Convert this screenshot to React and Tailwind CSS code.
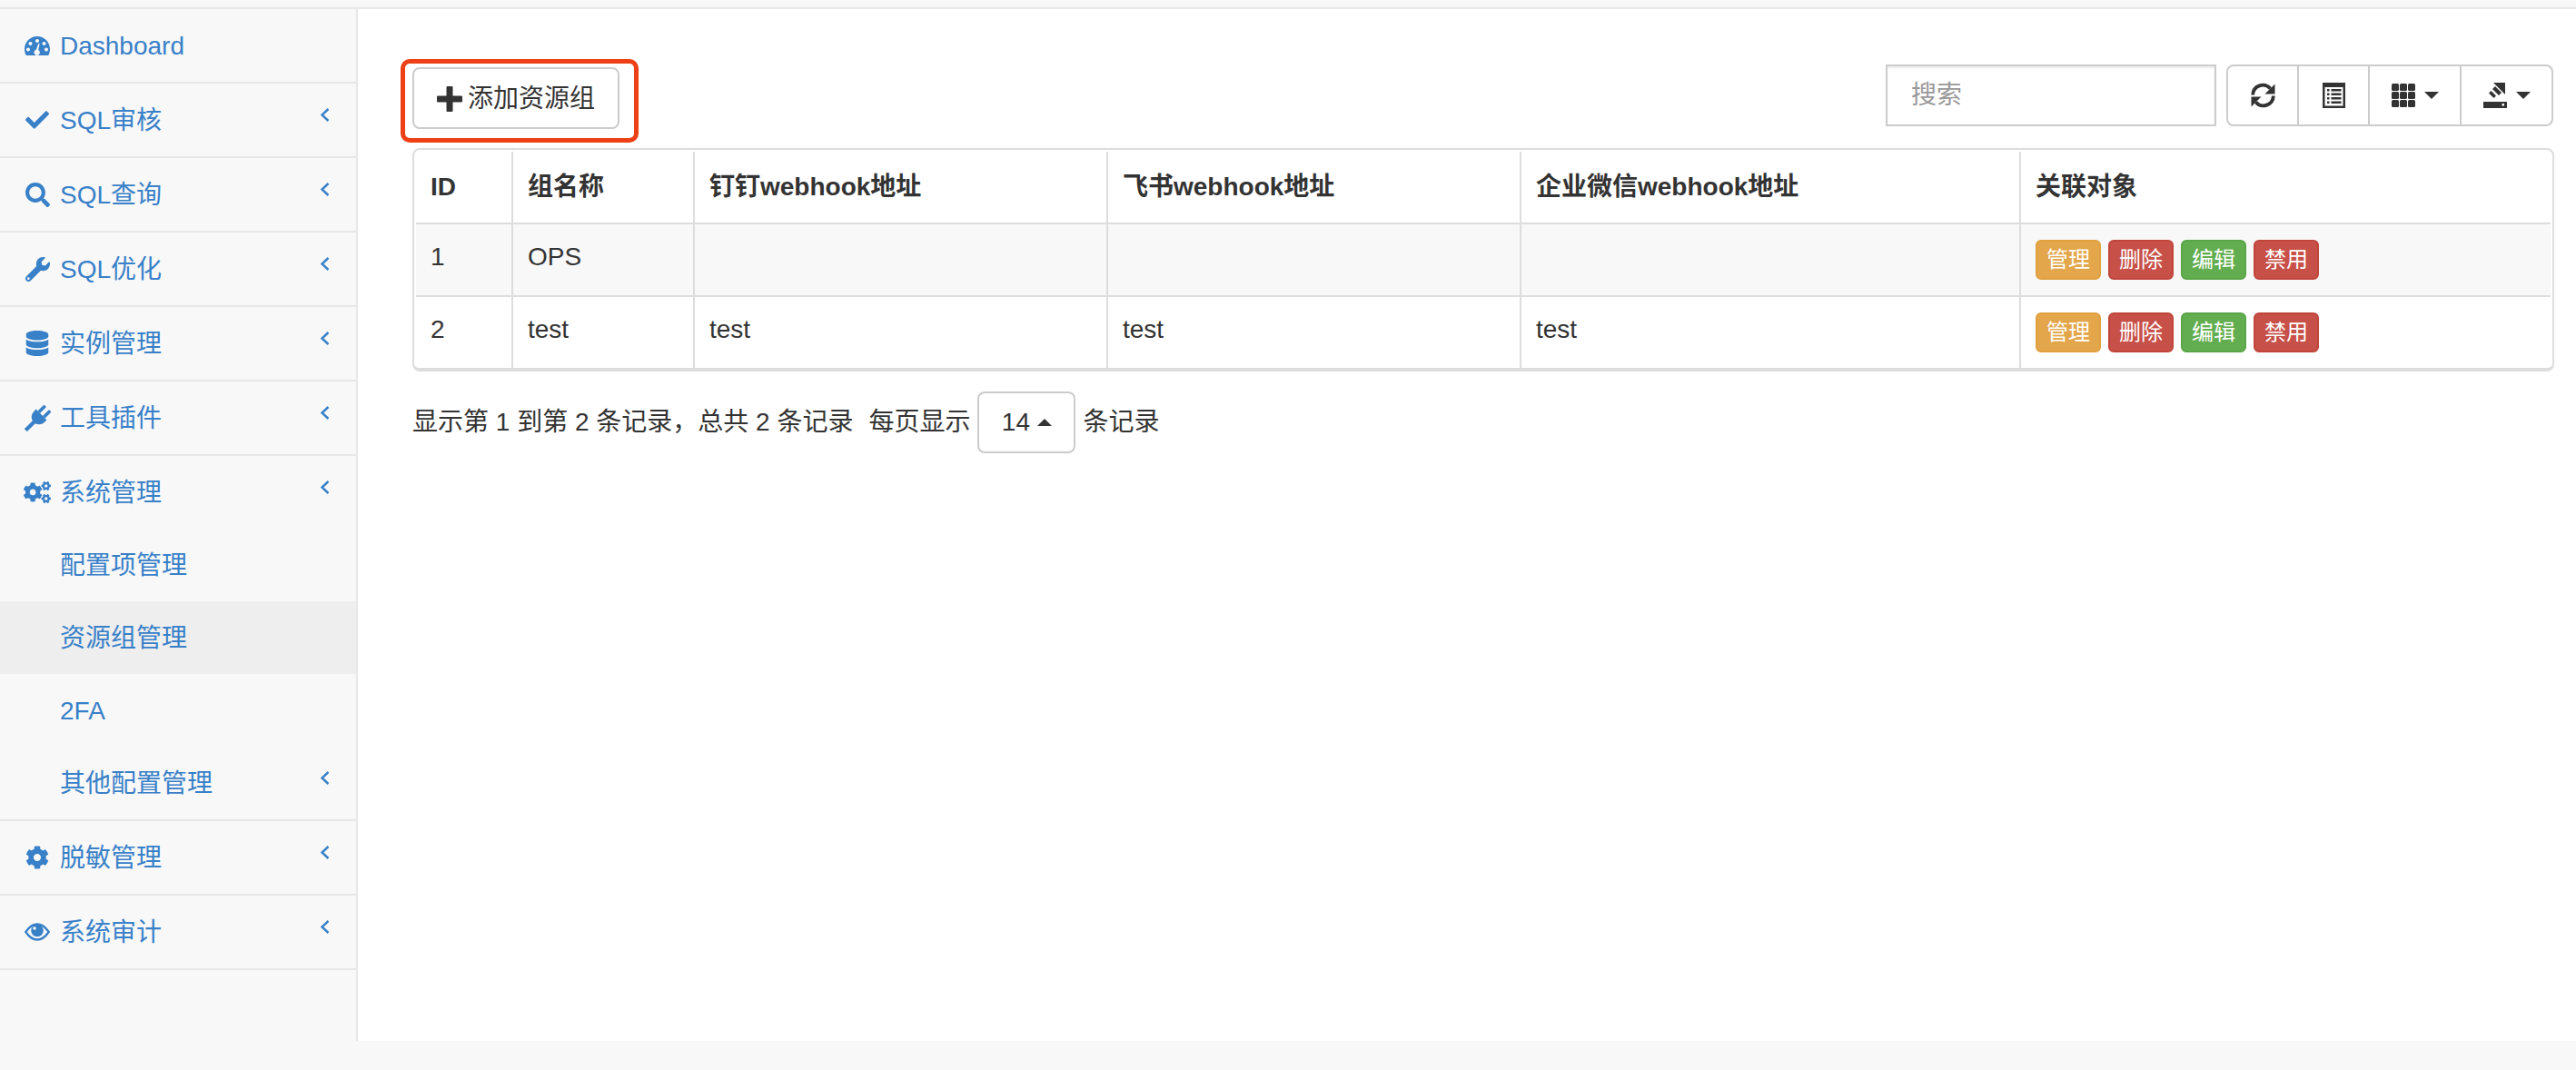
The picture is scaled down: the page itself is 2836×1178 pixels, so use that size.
import React from "react";
import { FaCheck, FaSearch, FaWrench, FaDatabase, FaCogs, FaCog } from "react-icons/fa";

function Chevron() {
  return (
    <svg width="12" height="20" viewBox="0 0 12 20" className="absolute right-[28px] top-[25px]" fill="none" stroke="#3880c8" strokeWidth="2.4">
      <path d="M9.5 3 L2.5 9.5 L9.5 16" />
    </svg>
  );
}

function Gauge() {
  return (
    <svg width="28" height="21" viewBox="0 0 28 21">
      <path
        fill="#3880c8"
        fillRule="evenodd"
        d="M14 0 C21.700 0 28 6.300 28 14 C28 16.500 27.400 19 26.200 21 H1.800 C.6 19 0 16.500 0 14 C0 6.300 6.300 0 14 0 Z M14 3 a2 2 0 1 0 .01 0 Z M6.500 6 a2 2 0 1 0 .01 0 Z M21.500 6 a2 2 0 1 0 .01 0 Z M4 12.500 a2 2 0 1 0 .01 0 Z M24 12.500 a2 2 0 1 0 .01 0 Z M15.200 8 L13 14.600 a3.200 3.200 0 1 0 2.200 .3 L16.600 8.500 Z"
      />
    </svg>
  );
}
function Plug() {
  return (
    <svg width="29" height="29" viewBox="0 0 28 28" fill="#3880c8">
      <g transform="rotate(45 14 14)">
        <path d="M6 8.500 H22 V12 a8 8 0 0 1 -16 0 Z" />
        <rect x="8.500" y="-1" width="3.500" height="9.500" rx="1" />
        <rect x="16" y="-1" width="3.500" height="9.500" rx="1" />
        <rect x="12" y="19" width="4" height="13" />
      </g>
    </svg>
  );
}
function Eye() {
  return (
    <svg width="28" height="20" viewBox="0 0 28 20">
      <path fill="none" stroke="#3880c8" strokeWidth="2.300" d="M1.300 10 C5.500 3.800 10 1.500 14 1.500 C18 1.500 22.500 3.800 26.700 10 C22.500 16.200 18 18.500 14 18.500 C10 18.500 5.500 16.200 1.300 10 Z" />
      <circle cx="14" cy="8.500" r="6.800" fill="#3880c8" />
      <circle cx="11" cy="6" r="1.800" fill="#f8f8f8" />
    </svg>
  );
}

function Row({ icon, label, chevron = true, border = true }) {
  return (
    <div className={"relative " + (border ? "border-b-2 border-[#e7e7e7]" : "")}>
      <a className="relative flex h-[80px] items-center pl-[26px] text-[#3880c8]">
        <span className="flex w-[30px] justify-center">{icon}</span>
        <span className="ml-[10px] pt-[2px]">{label}</span>
        {chevron && <Chevron />}
      </a>
    </div>
  );
}

function Sub({ label, active, chevron }) {
  return (
    <a className={"relative flex h-[80px] items-center pl-[66px] text-[#3880c8] " + (active ? "bg-[#eeeeee]" : "")}>
      <span className="pt-[1px]">{label}</span>
      {chevron && <Chevron />}
    </a>
  );
}

function Sidebar() {
  return (
    <aside className="h-[1136px] w-[394px] shrink-0 border-r-2 border-[#e7e7e7]">
      <Row icon={<Gauge />} label="Dashboard" chevron={false} />
      <Row icon={<FaCheck size={26} />} label="SQL审核" />
      <Row icon={<FaSearch size={27} />} label="SQL查询" />
      <Row icon={<FaWrench size={27} />} label="SQL优化" />
      <Row icon={<FaDatabase size={28} />} label="实例管理" />
      <Row icon={<Plug />} label="工具插件" />
      <Row icon={<FaCogs size={34} />} label="系统管理" border={false} />
      <Sub label="配置项管理" />
      <Sub label="资源组管理" active />
      <Sub label="2FA" />
      <Sub label="其他配置管理" chevron />
      <div className="border-b-2 border-[#e7e7e7]" />
      <Row icon={<FaCog size={26} />} label="脱敏管理" />
      <Row icon={<Eye />} label="系统审计" />
    </aside>
  );
}

function Refresh() {
  return (
    <svg width="27" height="28" viewBox="0 0 27 28" fill="#333">
      <path fill="none" stroke="#333" strokeWidth="3.800" d="M2.200 13.500 A11 11 0 0 1 21.500 6.500" />
      <path d="M26.500 1.500 V12.500 H15.500 Z" />
      <path fill="none" stroke="#333" strokeWidth="3.800" d="M24.800 14.500 A11 11 0 0 1 5.500 21.500" />
      <path d="M.5 26.500 V15.500 H11.500 Z" />
    </svg>
  );
}
function ListAlt() {
  return (
    <svg width="25" height="28" viewBox="0 0 25 28">
      <path fill="#333" d="M0 0 H25 V28 H0 Z" />
      <path fill="#fff" d="M2.500 5 H22.500 V25.500 H2.500 Z" />
      <path fill="#333" d="M5 7 H7.500 V9.500 H5 Z M9.500 7 H20.500 V9.500 H9.500 Z M5 11.500 H7.500 V14 H5 Z M9.500 11.500 H20.500 V14 H9.500 Z M5 16 H7.500 V18.500 H5 Z M9.500 16 H20.500 V18.500 H9.500 Z M5 20.500 H7.500 V23 H5 Z M9.500 20.500 H20.500 V23 H9.500 Z" />
    </svg>
  );
}
function Th() {
  const c = [];
  for (let y = 0; y < 3; y++) for (let x = 0; x < 3; x++) c.push(<rect key={x + "-" + y} x={x * 9} y={y * 9} width="8" height="8" rx="1.500" fill="#333" />);
  return <svg width="26" height="26" viewBox="0 0 26 26">{c}</svg>;
}
function ExportIcon() {
  return (
    <svg width="26" height="28" viewBox="0 0 26 28" fill="#333">
      <path d="M11 0 H24 V13 Z" />
      <path d="M13 4 L20 11 L17 14 L10 7 Z" />
      <path d="M8.500 9 L14 14.500 L11.500 17 L6 11.500 Z" />
      <path d="M0 21 H26 V28 H0 Z" />
      <rect x="20.500" y="23" width="2.500" height="2.500" fill="#fff" />
    </svg>
  );
}
function Caret({ up }) {
  return (
    <span className={"inline-block h-0 w-0 border-x-[8px] border-x-transparent " + (up ? "border-b-[8px] border-b-[#333]" : "border-t-[8px] border-t-[#333]")} />
  );
}

const cols = ["w-[105px]", "w-[200px]", "w-[455px]", "w-[455px]", "w-[550px]", "w-[585px]"];

function Act({ c, t }) {
  return <span className={"flex h-[44px] w-[72px] items-center justify-center rounded-[6px] border-2 text-[24px] leading-[34px] text-white " + c}>{t}</span>;
}

function Actions() {
  return (
    <div className="flex gap-2 pt-[1px]">
      <Act c="border-[#e0a040] bg-[#e3a64a]" t="管理" />
      <Act c="border-[#c0463c] bg-[#c75048]" t="删除" />
      <Act c="border-[#5aa548] bg-[#62ad50]" t="编辑" />
      <Act c="border-[#c0463c] bg-[#c75048]" t="禁用" />
    </div>
  );
}

function Table() {
  const heads = ["ID", "组名称", "钉钉webhook地址", "飞书webhook地址", "企业微信webhook地址", "关联对象"];
  const rows = [
    ["1", "OPS", "", "", ""],
    ["2", "test", "test", "test", "test"],
  ];
  return (
    <div className="rounded-[8px] border-x-2 border-b-4 border-t-2 border-[#dddddd] p-[2px] pb-0">
      <table className="w-[2350px] table-fixed border-separate border-spacing-0">
        <thead>
          <tr>
            {heads.map((h, i) => (
              <th key={h} className={cols[i] + " h-[78px] px-4 text-left align-middle font-bold text-[#333] " + (i ? "border-l-2 border-[#dddddd]" : "")}>{h}</th>
            ))}
          </tr>
        </thead>
        <tbody>
          {rows.map((r, ri) => (
            <tr key={ri} className={ri === 0 ? "bg-[#f8f8f8]" : ""}>
              {r.map((v, i) => (
                <td key={i} className={"h-[80px] border-t-2 border-[#dddddd] px-4 py-4 align-top text-[#333] " + (i ? "border-l-2" : "")}>{v}</td>
              ))}
              <td className="h-[80px] border-l-2 border-t-2 border-[#dddddd] px-4 py-4 align-top"><Actions /></td>
            </tr>
          ))}
        </tbody>
      </table>
    </div>
  );
}

const groupBtn = "flex h-full items-center justify-center gap-[10px] ";

export default function App() {
  return (
    <div className="min-h-screen bg-[#f8f8f8] text-[28px] leading-[40px] text-[#333]" style={{ fontFamily: '"Liberation Sans","Noto Sans CJK SC",sans-serif' }}>
      <div className="h-[10px] border-b-2 border-[#e7e7e7]" />
      <div className="flex">
        <Sidebar />
        <main className="h-[1136px] flex-1 bg-white pl-[60px] pr-[24px] pt-[61px]">
          <div className="flex h-[92px] justify-between">
            <div className="relative mt-[3px] h-[68px]">
              <button className="flex h-[68px] w-[228px] items-center justify-center gap-[6px] rounded-[8px] border-2 border-[#cccccc] bg-white pt-[2px] text-[#333]">
                <svg width="28" height="28" viewBox="0 0 28 28" fill="#333"><path d="M10.500 1 a1 1 0 0 1 1 -1 H16.500 a1 1 0 0 1 1 1 V10.500 H27 a1 1 0 0 1 1 1 V16.500 a1 1 0 0 1 -1 1 H17.500 V27 a1 1 0 0 1 -1 1 H11.500 a1 1 0 0 1 -1 -1 V17.500 H1 a1 1 0 0 1 -1 -1 V11.500 a1 1 0 0 1 1 -1 H10.500 Z" /></svg>
                添加资源组
              </button>
              <div className="absolute left-[-13px] top-[-9px] h-[92px] w-[262px] rounded-[10px] border-[5px] border-[#ee4016]" />
            </div>
            <div className="mr-[1px] flex h-[68px] gap-[11px]">
              <input placeholder="搜索" className="h-[68px] w-[364px] border-2 border-[#cccccc] px-[26px] shadow-[inset_0_2px_2px_rgba(0,0,0,0.075)] outline-none placeholder:text-[#999]" />
              <div className="flex h-[68px] w-[360px] rounded-[8px] border-2 border-[#cccccc]">
                <div className={groupBtn + "w-[76px]"}><Refresh /></div>
                <div className={groupBtn + "w-[78px] border-l-2 border-[#cccccc]"}><ListAlt /></div>
                <div className={groupBtn + "w-[101px] border-l-2 border-[#cccccc]"}><Th /><Caret /></div>
                <div className={groupBtn + "flex-1 border-l-2 border-[#cccccc]"}><ExportIcon /><Caret /></div>
              </div>
            </div>
          </div>
          <Table />
          <div className="mt-[22px] flex h-[68px] items-center whitespace-pre">
            <span>显示第 1 到第 2 条记录，总共 2 条记录</span>
            <span className="ml-[17px]">每页显示</span>
            <div className="ml-2 flex h-[68px] w-[108px] items-center justify-center gap-[8px] rounded-[8px] border-2 border-[#cccccc]">14<Caret up /></div>
            <span className="ml-2">条记录</span>
          </div>
        </main>
      </div>
    </div>
  );
}
